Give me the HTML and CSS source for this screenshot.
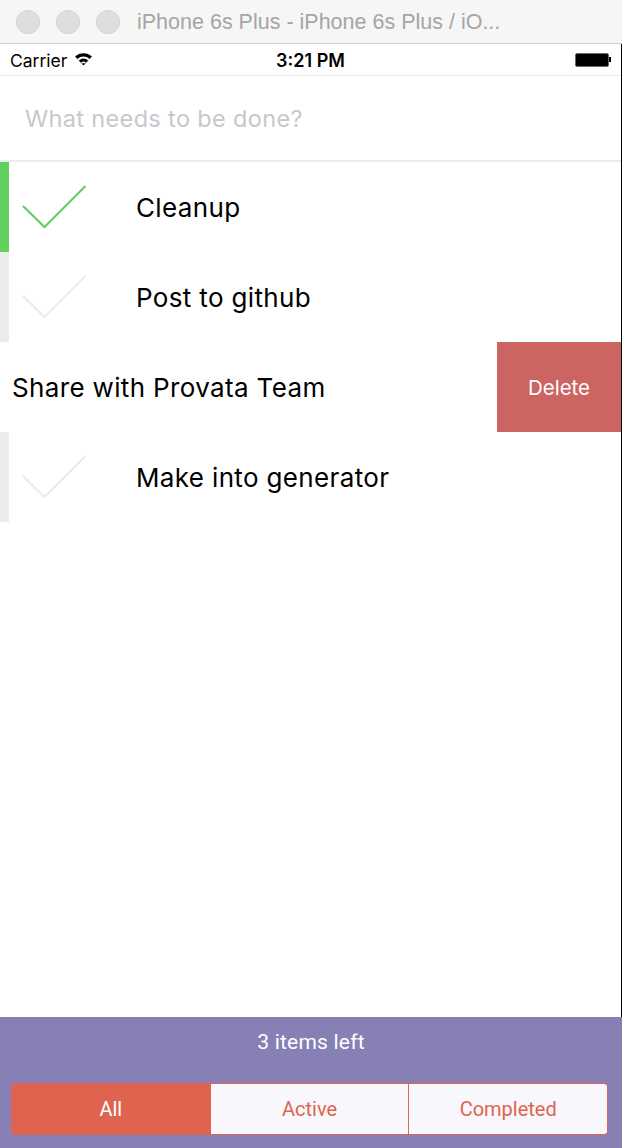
FILE: index.html
```html
<!DOCTYPE html>
<html>
<head>
<meta charset="utf-8">
<link rel="stylesheet" href="styles.css">
</head>
<body>
<div class="window">
  <div class="titlebar">
    <div class="lights">
      <span class="light"></span><span class="light"></span><span class="light"></span>
    </div>
    <div class="title">iPhone 6s Plus - iPhone 6s Plus / iO...</div>
  </div>
  <div class="screen">
    <div class="app">
      <div class="statusbar">
        <div class="carrier">Carrier
          <svg class="wifi" width="19" height="14" viewBox="0 0 18 13">
            <path d="M9 12.5 L1 4.2 A11.5 11.5 0 0 1 17 4.2 Z" fill="#000"/>
            <path d="M9 12.5 L3.2 6.4 A8.3 8.3 0 0 1 14.8 6.4 Z" fill="#fff"/>
            <path d="M9 12.5 L4.6 7.9 A6.2 6.2 0 0 1 13.4 7.9 Z" fill="#000"/>
            <path d="M9 12.5 L6.7 10.1 A3.2 3.2 0 0 1 11.3 10.1 Z" fill="#fff"/>
            <path d="M9 12.5 L7.6 11 A2 2 0 0 1 10.4 11 Z" fill="#000"/>
          </svg>
        </div>
        <div class="time">3:21 PM</div>
        <div class="battery"><span class="cell"></span><span class="nub"></span></div>
      </div>
      <div class="newtodo">What needs to be done?</div>
      <div class="list">
        <div class="row">
          <div class="item done">
            <span class="bar"></span>
            <svg class="check" width="70" height="44" viewBox="0 0 70 44"><polyline points="1,21 22.5,42 63.5,1" fill="none" stroke="#5fcd5c" stroke-width="2"/></svg>
            <span class="label">Cleanup</span>
          </div>
        </div>
        <div class="row">
          <div class="item">
            <span class="bar"></span>
            <svg class="check" width="70" height="44" viewBox="0 0 70 44"><polyline points="1,21 22.5,42 63.5,1" fill="none" stroke="#ececec" stroke-width="2"/></svg>
            <span class="label">Post to github</span>
          </div>
        </div>
        <div class="row swiped">
          <div class="delete">Delete</div>
          <div class="item">
            <span class="bar"></span>
            <svg class="check" width="70" height="44" viewBox="0 0 70 44"><polyline points="1,21 22.5,42 63.5,1" fill="none" stroke="#ececec" stroke-width="2"/></svg>
            <span class="label">Share with Provata Team</span>
          </div>
        </div>
        <div class="row">
          <div class="item">
            <span class="bar"></span>
            <svg class="check" width="70" height="44" viewBox="0 0 70 44"><polyline points="1,21 22.5,42 63.5,1" fill="none" stroke="#ececec" stroke-width="2"/></svg>
            <span class="label">Make into generator</span>
          </div>
        </div>
      </div>
    </div>
    <div class="footer">
      <div class="count">3 items left</div>
      <div class="segments">
        <div class="seg active">All</div>
        <div class="seg">Active</div>
        <div class="seg">Completed</div>
      </div>
    </div>
  </div>
</div>
</body>
</html>
```
FILE: styles.css
```css
html, body {
  margin: 0;
  padding: 0;
  background: #fff;
}
.window {
  width: 622px;
  height: 1148px;
  display: flex;
  flex-direction: column;
  overflow: hidden;
}
.titlebar {
  height: 43px;
  flex: none;
  background: #f6f6f6;
  border-bottom: 1px solid #cdcdcd;
  display: flex;
  align-items: center;
  padding-left: 16px;
  gap: 17px;
}
.lights {
  display: flex;
  gap: 16px;
}
.light {
  width: 24px;
  height: 24px;
  border-radius: 50%;
  background: #dedede;
  box-sizing: border-box;
  border: 1px solid #d2d2d2;
}
.title {
  font-family: "Liberation Sans", Arial, sans-serif;
  font-size: 21.5px;
  color: #a5a5a5;
  white-space: nowrap;
  padding-top: 1px;
}
.screen {
  flex: 1;
  display: flex;
  flex-direction: column;
}
.app {
  flex: 1;
  border-right: 1px solid #000;
  display: flex;
  flex-direction: column;
  overflow: hidden;
}
.statusbar {
  height: 31px;
  flex: none;
  border-bottom: 1px solid #e8e8e8;
  display: flex;
  align-items: center;
  justify-content: space-between;
  padding: 0 10px 0 10px;
  position: relative;
  font-family: Inter, "Noto Sans", sans-serif;
  font-size: 17.5px;
  color: #000;
}
.carrier {
  display: flex;
  align-items: center;
  gap: 7px;
  padding-top: 1px;
}
.wifi {
  margin-top: -2px;
}
.time {
  position: absolute;
  left: 0;
  right: 0;
  text-align: center;
  font-weight: 600;
  font-size: 18px;
  padding-top: 1px;
}
.battery {
  display: flex;
  align-items: center;
}
.cell {
  width: 32px;
  height: 12px;
  background: #000;
  border: 1px solid #6a6a6a;
  border-radius: 2px;
}
.nub {
  width: 2px;
  height: 5px;
  background: #000;
}
.newtodo {
  height: 84px;
  flex: none;
  border-bottom: 2px solid #ececec;
  display: flex;
  align-items: center;
  padding-left: 25px;
  font-family: Inter, "Noto Sans", sans-serif;
  font-size: 23.5px;
  letter-spacing: 0.35px;
  color: #c7c7cc;
}
.list {
  display: flex;
  flex-direction: column;
}
.row {
  height: 90px;
  position: relative;
  overflow: hidden;
}
.item {
  height: 90px;
  display: flex;
  align-items: center;
  background: #fff;
  position: relative;
}
.swiped .item {
  transform: translateX(-124px);
}
.bar {
  width: 9px;
  height: 90px;
  background: #ececec;
  flex: none;
}
.done .bar {
  background: #62d05e;
}
.check {
  margin-left: 13px;
  flex: none;
}
.label {
  margin-left: 44px;
  font-family: Inter, "Noto Sans", sans-serif;
  font-size: 26px;
  letter-spacing: 0.35px;
  color: #000;
  white-space: nowrap;
}
.delete {
  position: absolute;
  right: 0;
  top: 0;
  width: 124px;
  height: 90px;
  background: #cc6462;
  color: #fff;
  display: flex;
  align-items: center;
  justify-content: center;
  font-family: Inter, "Noto Sans", sans-serif;
  font-size: 20.5px;
}
.footer {
  height: 131px;
  flex: none;
  background: #8680b5;
  display: flex;
  flex-direction: column;
  align-items: center;
  font-family: Roboto, "Noto Sans", sans-serif;
}
.count {
  color: #fff;
  font-size: 21px;
  letter-spacing: 0.2px;
  margin-top: 13px;
  height: 24px;
  line-height: 24px;
}
.segments {
  margin-top: 29px;
  width: 597px;
  height: 52px;
  box-sizing: border-box;
  display: flex;
  border: 1px solid #de6550;
  border-radius: 4px;
  overflow: hidden;
  align-self: flex-start;
  margin-left: 11px;
}
.seg {
  flex: 1;
  display: flex;
  align-items: center;
  justify-content: center;
  background: #f8f7fb;
  color: #de6550;
  font-size: 20px;
  border-left: 1px solid #de6550;
}
.seg:first-child {
  border-left: none;
}
.seg.active {
  background: #de6450;
  color: #fff;
}
```
